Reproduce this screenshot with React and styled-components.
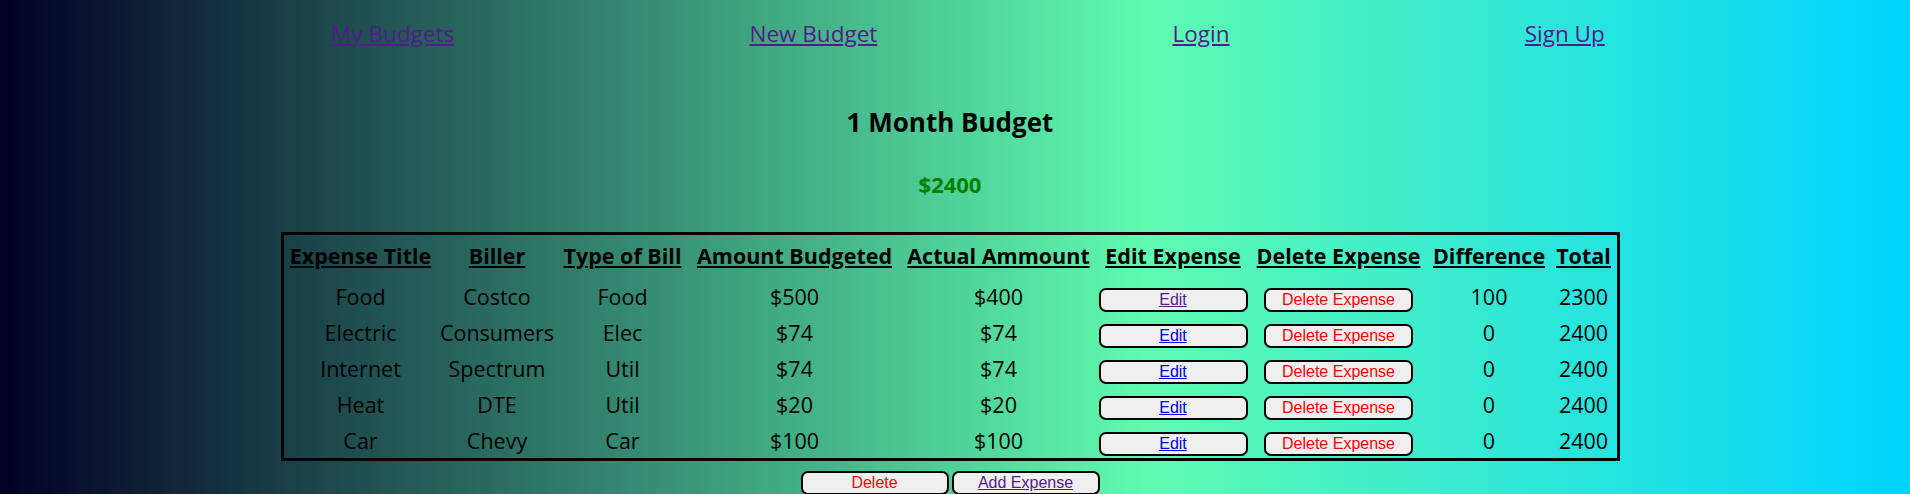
import React from "react";
import styled, { createGlobalStyle } from "styled-components";

const expenses = [
  { title: "Food", biller: "Costco", type: "Food", budgeted: 500, actual: 400, visited: true },
  { title: "Electric", biller: "Consumers", type: "Elec", budgeted: 74, actual: 74 },
  { title: "Internet", biller: "Spectrum", type: "Util", budgeted: 74, actual: 74 },
  { title: "Heat", biller: "DTE", type: "Util", budgeted: 20, actual: 20 },
  { title: "Car", biller: "Chevy", type: "Car", budgeted: 100, actual: 100 },
];

const columns = [
  { label: "Expense Title", width: 150 },
  { label: "Biller", width: 119 },
  { label: "Type of Bill", width: 128 },
  { label: "Amount Budgeted", width: 212 },
  { label: "Actual Ammount", width: 192 },
  { label: "Edit Expense", width: 153 },
  { label: "Delete Expense", width: 174 },
  { label: "Difference", width: 123 },
  { label: "Total", width: 62 },
];

const BUDGET = 2400;

const GlobalStyle = createGlobalStyle`
  html, body {
    margin: 0;
    padding: 0;
  }
  body {
    font-family: "Open Sans", "Noto Sans", sans-serif;
  }
`;

const App = () => {
  return (
    <Page>
      <GlobalStyle />
      <NavList>
        <NavItem><NavLink href="#">My Budgets</NavLink></NavItem>
        <NavItem><NavLink href="#">New Budget</NavLink></NavItem>
        <NavItem><NavLink href="#">Login</NavLink></NavItem>
        <NavItem><NavLink href="#">Sign Up</NavLink></NavItem>
      </NavList>
      <Main>
        <Title>1 Month Budget</Title>
        <Amount>${BUDGET}</Amount>
        <Table>
          <thead>
            <tr>
              {columns.map((col) => (
                <Th key={col.label} $w={col.width}>
                  {col.label}
                </Th>
              ))}
            </tr>
          </thead>
          <tbody>
            {expenses.map((exp) => {
              const diff = exp.budgeted - exp.actual;
              return (
                <tr key={exp.title}>
                  <Td>{exp.title}</Td>
                  <Td>{exp.biller}</Td>
                  <Td>{exp.type}</Td>
                  <Td>${exp.budgeted}</Td>
                  <Td>${exp.actual}</Td>
                  <Td>
                    <Button $width={149}>
                      <ButtonLink href="#" $visited={exp.visited}>
                        Edit
                      </ButtonLink>
                    </Button>
                  </Td>
                  <Td>
                    <Button $width={149} $danger>
                      Delete Expense
                    </Button>
                  </Td>
                  <Td>{diff}</Td>
                  <Td>{BUDGET - diff}</Td>
                </tr>
              );
            })}
          </tbody>
        </Table>
        <Actions>
          <Button $width={148} $danger>
            Delete
          </Button>
          <Button $width={148}>
            <ButtonLink href="#" $visited>
              Add Expense
            </ButtonLink>
          </Button>
        </Actions>
      </Main>
    </Page>
  );
};

const Page = styled.div`
  min-height: 100vh;
  box-sizing: border-box;
  padding-right: 10px;
  background: linear-gradient(
    90deg,
    rgba(2, 0, 36, 1) 0%,
    rgba(95, 251, 176, 1) 60%,
    rgba(0, 212, 255, 1) 100%
  );
  overflow: hidden;
`;

const NavList = styled.ul`
  display: flex;
  justify-content: space-evenly;
  list-style: none;
  margin: 19px 0 0;
  padding: 0 0 0 36px;
  font-size: 22.5px;
  line-height: 30px;
`;

const NavItem = styled.li``;

const NavLink = styled.a`
  color: #551a8b;
  text-decoration: underline;
`;

const Main = styled.main`
  display: flex;
  flex-direction: column;
  align-items: center;
`;

const Title = styled.h2`
  margin: 55px 0 0;
  font-size: 26px;
  line-height: 36px;
  font-weight: 700;
  color: #000;
`;

const Amount = styled.h3`
  margin: 30px 0 0;
  font-size: 22px;
  line-height: 28px;
  font-weight: 700;
  color: green;
`;

const Table = styled.table`
  margin-top: 34px;
  width: 1339px;
  table-layout: fixed;
  border: 3px solid #000;
  border-spacing: 2px;
  color: #000;
`;

const Th = styled.th`
  width: ${(p) => p.$w}px;
  padding: 4px 0 5px;
  font-size: 21.5px;
  line-height: 30px;
  font-weight: 700;
  text-decoration: underline;
  text-align: center;
  white-space: nowrap;
`;

const Td = styled.td`
  padding: 4px 0 0;
  font-size: 21.5px;
  line-height: 30px;
  text-align: center;
  white-space: nowrap;
`;

const Button = styled.button`
  box-sizing: border-box;
  width: ${(p) => p.$width}px;
  padding: 1px 6px;
  border: 2px solid #000;
  border-radius: 7px;
  background: #efefef;
  font-family: "Liberation Sans", Arial, sans-serif;
  font-size: 16px;
  color: ${(p) => (p.$danger ? "#ff0000" : "#000")};
  vertical-align: baseline;
  cursor: pointer;
`;

const ButtonLink = styled.a`
  color: ${(p) => (p.$visited ? "#551a8b" : "#0000ee")};
  text-decoration: underline;
`;

const Actions = styled.div`
  display: flex;
  gap: 3px;
  margin-top: 10px;
`;

export default App;
